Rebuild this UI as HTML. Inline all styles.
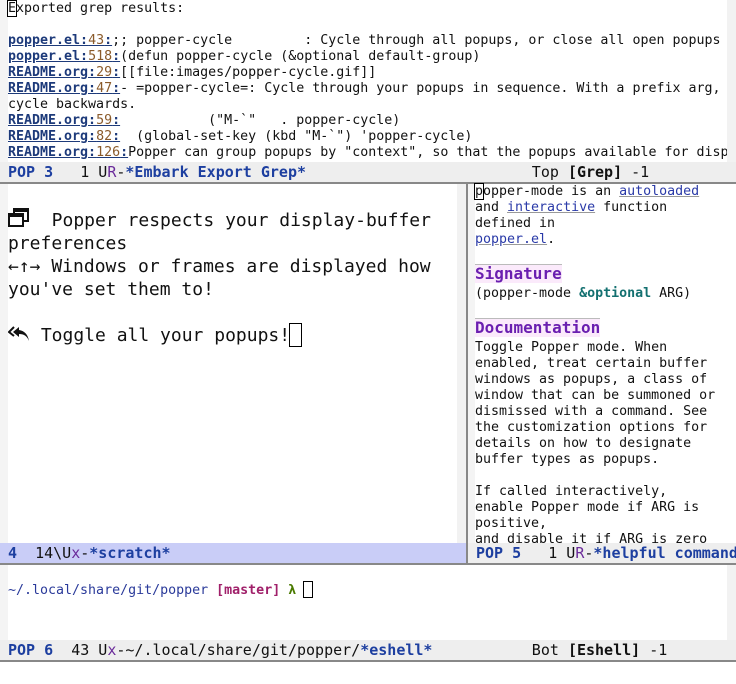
<!DOCTYPE html>
<html><head><meta charset="utf-8"><style>
*{margin:0;padding:0;box-sizing:border-box}
body{width:736px;height:684px;background:#fff;position:relative;overflow:hidden;font-family:"DejaVu Sans Mono","Liberation Mono",monospace;font-size:13.3px;color:#111}
.a{position:absolute;white-space:pre;line-height:16px}
.l{color:#1d3a7a;font-weight:bold;text-decoration:underline}
.n{color:#8a5a2a;text-decoration:underline;text-decoration-color:#1d3a7a}
.ml{position:absolute;height:20px;line-height:20px;white-space:pre;font-size:15px;color:#111;overflow:hidden}
.b{color:#1d3fa0;font-weight:bold}
.p{color:#6a2a9a}
.lk{color:#2a3aa8;text-decoration:underline;text-decoration-color:#999}
.h{color:#6a1fb0;font-weight:bold;font-size:16px;background:#fbeafb;border-top:1px solid #bbb;display:inline-block;line-height:18px}
.big{position:absolute;white-space:pre;font-size:18px;line-height:23px}
</style></head><body>
<!-- top window -->
<div style="position:absolute;left:0;top:0;width:8px;height:163px;background:#f4f4f4"></div>
<div style="position:absolute;left:727px;top:0;width:9px;height:163px;background:#f2f2f2"></div>
<div class="a" style="left:8px;top:1px"><span style="outline:1px solid #000">E</span>xported grep results:</div>
<div class="a" style="left:8px;top:33px"><span class="l">popper.el:</span><span class="n">43</span><span class="l">:</span>;; popper-cycle         : Cycle through all popups, or close all open popups</div>
<div class="a" style="left:8px;top:49px"><span class="l">popper.el:</span><span class="n">518</span><span class="l">:</span>(defun popper-cycle (&amp;optional default-group)</div>
<div class="a" style="left:8px;top:65px"><span class="l">README.org:</span><span class="n">29</span><span class="l">:</span>[[file:images/popper-cycle.gif]]</div>
<div class="a" style="left:8px;top:81px"><span class="l">README.org:</span><span class="n">47</span><span class="l">:</span>- =popper-cycle=: Cycle through your popups in sequence. With a prefix arg,</div>
<div class="a" style="left:8px;top:97px">cycle backwards.</div>
<div class="a" style="left:8px;top:113px"><span class="l">README.org:</span><span class="n">59</span><span class="l">:</span>           ("M-`"   . popper-cycle)</div>
<div class="a" style="left:8px;top:129px"><span class="l">README.org:</span><span class="n">82</span><span class="l">:</span>  (global-set-key (kbd "M-`") 'popper-cycle)</div>
<div class="a" style="left:8px;top:145px;width:719px;overflow:hidden"><span class="l">README.org:</span><span class="n">126</span><span class="l">:</span>Popper can group popups by "context", so that the popups available for disp</div>
<div class="ml" style="left:0;top:162px;width:736px;background:#eeeeee;padding-left:8px"><span class="b">POP 3</span>   1 U<span class="p">R</span>-<span class="b">*Embark Export Grep*</span>                         Top <b>[Grep]</b> -1</div>
<div style="position:absolute;left:0;top:182px;width:736px;height:2px;background:#888"></div>
<!-- middle left -->
<div style="position:absolute;left:0;top:184px;width:8px;height:359px;background:#f4f4f4"></div>
<div style="position:absolute;left:457px;top:184px;width:9px;height:359px;background:#f2f2f2"></div>
<div class="big" style="left:8px;top:208px"><svg width="22" height="20" viewBox="0 0 22 20" style="vertical-align:-2px"><rect x="6" y="1" width="14" height="12" fill="none" stroke="#111" stroke-width="2"/><rect x="6" y="1" width="14" height="3" fill="#111"/><rect x="1" y="6" width="14" height="12" fill="#fff" stroke="#111" stroke-width="2"/><rect x="1" y="6" width="14" height="3" fill="#111"/></svg>  Popper respects your display-buffer
preferences
←↑→ Windows or frames are displayed how
you've set them to!

<svg width="22" height="18" viewBox="0 0 22 18" style="vertical-align:-2px"><path d="M6 2 L1 7 L6 11" fill="none" stroke="#111" stroke-width="2"/><path d="M11 2 L5 7 L11 12 V9 C16 9 19 11 21 16 C20 10 17 6 11 5 Z" fill="#111"/></svg> Toggle all your popups!<span style="outline:1px solid #000;display:inline-block;width:11px;height:22px;vertical-align:-5px"></span></div>
<div class="ml" style="left:0;top:543px;width:466px;background:#c9cdf7;padding-left:8px"><span class="b">4</span>  14\U<span class="p">x</span>-<span class="b">*scratch*</span></div>
<div style="position:absolute;left:466px;top:184px;width:2px;height:379px;background:#888"></div>
<!-- right help -->
<div style="position:absolute;left:468px;top:184px;width:7px;height:359px;background:#f4f4f4"></div>
<div class="a" style="left:475px;top:184px"><span style="outline:1px solid #000">p</span>opper-mode is an <span class="lk">autoloaded</span>
and <span class="lk">interactive</span> function
defined in
<span class="lk">popper.el</span>.</div>
<div class="a" style="left:475px;top:264px"><span class="h">Signature</span></div>
<div class="a" style="left:475px;top:286px">(popper-mode <b style="color:#137070">&amp;optional</b> ARG)</div>
<div class="a" style="left:475px;top:318px"><span class="h">Documentation</span></div>
<div class="a" style="left:475px;top:340px;height:203px;overflow:hidden">Toggle Popper mode. When
enabled, treat certain buffer
windows as popups, a class of
window that can be summoned or
dismissed with a command. See
the customization options for
details on how to designate
buffer types as popups.

If called interactively,
enable Popper mode if ARG is
positive,
and disable it if ARG is zero</div>
<div class="ml" style="left:468px;top:543px;width:268px;background:#eeeeee;padding-left:8px"><span class="b">POP 5</span>   1 U<span class="p">R</span>-<span class="b">*helpful command</span></div>
<div style="position:absolute;left:0;top:563px;width:736px;height:2px;background:#888"></div>
<!-- eshell -->
<div style="position:absolute;left:0;top:565px;width:8px;height:75px;background:#f4f4f4"></div>
<div style="position:absolute;left:727px;top:565px;width:9px;height:75px;background:#f2f2f2"></div>
<div class="a" style="left:8px;top:582px"><span style="color:#2a3a9a">~/.local/share/git/popper</span> <b style="color:#a0206a">[master]</b> <b style="color:#4a7a00">λ</b> <span style="outline:1px solid #000;display:inline-block;width:8px;height:15px;vertical-align:-3px"></span></div>
<div class="ml" style="left:0;top:640px;width:736px;background:#eeeeee;padding-left:8px"><span class="b">POP 6</span>  43 U<span class="p">x</span>-~/.local/share/git/popper/<span class="b">*eshell*</span>           Bot <b>[Eshell]</b> -1</div>
<div style="position:absolute;left:0;top:660px;width:736px;height:2px;background:#888"></div>
</body></html>
